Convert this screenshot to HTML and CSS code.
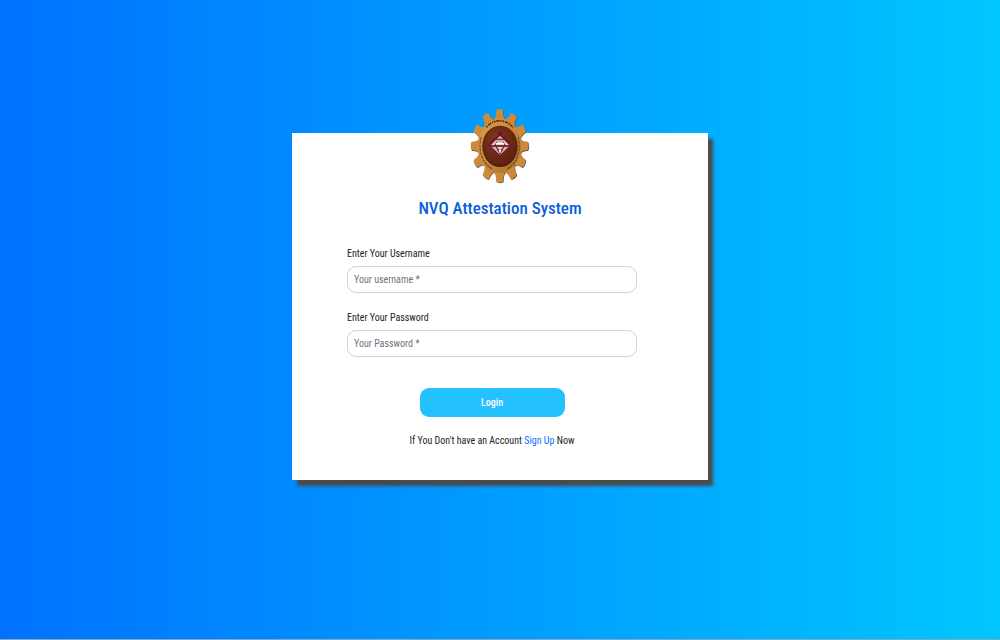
FILE: index.html
```html
<!DOCTYPE html>
<html lang="en">
<head>
<meta charset="utf-8">
<meta name="viewport" content="width=device-width, initial-scale=1">
<title>NVQ Attestation System</title>
<link rel="stylesheet" href="styles.css">
</head>
<body>
<main class="page">
  <section class="card">
    <svg class="logo" viewBox="29 24 180 228" role="img" aria-label="NVQ gear emblem">
      <defs>
        <linearGradient id="gold" x1="0" y1="0" x2="1" y2="1">
          <stop offset="0" stop-color="#e0a04c"/><stop offset=".5" stop-color="#c9883a"/><stop offset="1" stop-color="#a96c28"/>
        </linearGradient>
        <radialGradient id="disc" cx=".4" cy=".35" r=".7">
          <stop offset="0" stop-color="#84371d"/><stop offset="1" stop-color="#5c200f"/>
        </radialGradient>
        <path id="tooth" d="M-22-78Q-13-84-13-107Q0-113 13-107Q13-84 22-78Z"/>
        <g id="gear">
          <use href="#tooth"/><use href="#tooth" transform="rotate(30)"/><use href="#tooth" transform="rotate(60)"/>
          <use href="#tooth" transform="rotate(90)"/><use href="#tooth" transform="rotate(120)"/><use href="#tooth" transform="rotate(150)"/>
          <use href="#tooth" transform="rotate(180)"/><use href="#tooth" transform="rotate(210)"/><use href="#tooth" transform="rotate(240)"/>
          <use href="#tooth" transform="rotate(270)"/><use href="#tooth" transform="rotate(300)"/><use href="#tooth" transform="rotate(330)"/>
          <circle r="83"/>
        </g>
      </defs>
      <g transform="translate(118 138) scale(.79 1)">
        <use href="#gear" fill="#5d4a36" transform="translate(2 2)"/>
        <use href="#gear" fill="#cc8a3c"/>
        <circle r="81" fill="url(#gold)"/>
        <path d="M-51-56A76 76 0 0 1 51-56" fill="none" stroke="#4b2b12" stroke-width="5" stroke-dasharray="7 3 12 3 5 3"/>
        <path d="M-70-26A74 74 0 0 0-30 68M70-26A74 74 0 0 1 30 68" fill="none" stroke="#6b431b" stroke-width="4" stroke-dasharray="7 3 10 3"/>
      </g>
      <ellipse cx="119" cy="139" rx="53" ry="62" fill="#4a210f"/>
      <ellipse cx="119" cy="138" rx="50" ry="59" fill="url(#disc)"/>
      <circle cx="119" cy="100" r="6" fill="#641622"/>
      <path d="M119 103L137 115L154 136L119 172L84 136L101 115Z" fill="#711526"/>
      <path d="M119 107L136 124H102Z" fill="#c9a9a8"/>
      <path d="M103 124H135L147 136H91Z" fill="#dfcfcc"/>
      <path d="M93 140H145L119 166Z" fill="#c9aeac"/>
      <path d="M94 138H144M107 118H131M108 141L119 163L130 141M113 148H125M110 126L104 136M128 126L134 136" fill="none" stroke="#711526" stroke-width="3"/>
      <path d="M107 131H131M119 141V158" fill="none" stroke="#fff" stroke-width="4"/>
    </svg>
    <h1 class="title">NVQ Attestation System</h1>
    <form class="form">
      <div class="field">
        <label class="label" for="username">Enter Your Username</label>
        <input class="input" id="username" type="text" placeholder="Your username *">
      </div>
      <div class="field">
        <label class="label" for="password">Enter Your Password</label>
        <input class="input" id="password" type="password" placeholder="Your Password *">
      </div>
      <button class="button" type="submit">Login</button>
      <p class="signup">If You Don't have an Account <a class="link" href="#signup">Sign Up</a> Now</p>
    </form>
  </section>
</main>
</body>
</html>
```
FILE: styles.css
```css
* {
  box-sizing: border-box;
}

body {
  margin: 0;
  font-family: "Roboto Condensed", Roboto, sans-serif;
  color: #212529;
}

.page {
  display: flex;
  justify-content: center;
  align-items: flex-start;
  min-height: 100vh;
  padding: 133px 16px 16px;
  border-bottom: 1px solid #8fa3b8;
  background: linear-gradient(to right, #0072ff, #00c6ff);
}

.card {
  display: flex;
  flex-direction: column;
  width: 100%;
  max-width: 416px;
  padding-bottom: 32px;
  background: #fff;
  box-shadow: 5px 6px 3px #4a4a4a;
}

.logo {
  align-self: center;
  width: 60px;
  height: 76px;
  margin-top: -25px;
}

.title {
  margin: 12px 0 0;
  font-size: 17px;
  font-weight: 500;
  line-height: 24px;
  text-align: center;
  color: #0b5ed7;
}

.form {
  display: flex;
  flex-direction: column;
  gap: 17px;
  padding: 26px 71px 0 55px;
}

.field {
  display: flex;
  flex-direction: column;
  gap: 4px;
}

.label {
  font-size: 10px;
  line-height: 16px;
}

.input {
  width: 100%;
  height: 27px;
  padding: 0 6px;
  border: 1px solid #ced4da;
  border-radius: 9px;
  background: #fff;
  font: inherit;
  font-size: 10px;
}

.input::placeholder {
  color: #6c757d;
}

.button {
  align-self: center;
  width: 50%;
  height: 29px;
  margin-top: 14px;
  border: 0;
  border-radius: 9px;
  background: #24c1ff;
  color: #fff;
  font: inherit;
  font-size: 10px;
  font-weight: 500;
}

.signup {
  margin: 0;
  font-size: 10px;
  line-height: 14px;
  text-align: center;
}

.link {
  color: #0d6efd;
  text-decoration: none;
}
```
